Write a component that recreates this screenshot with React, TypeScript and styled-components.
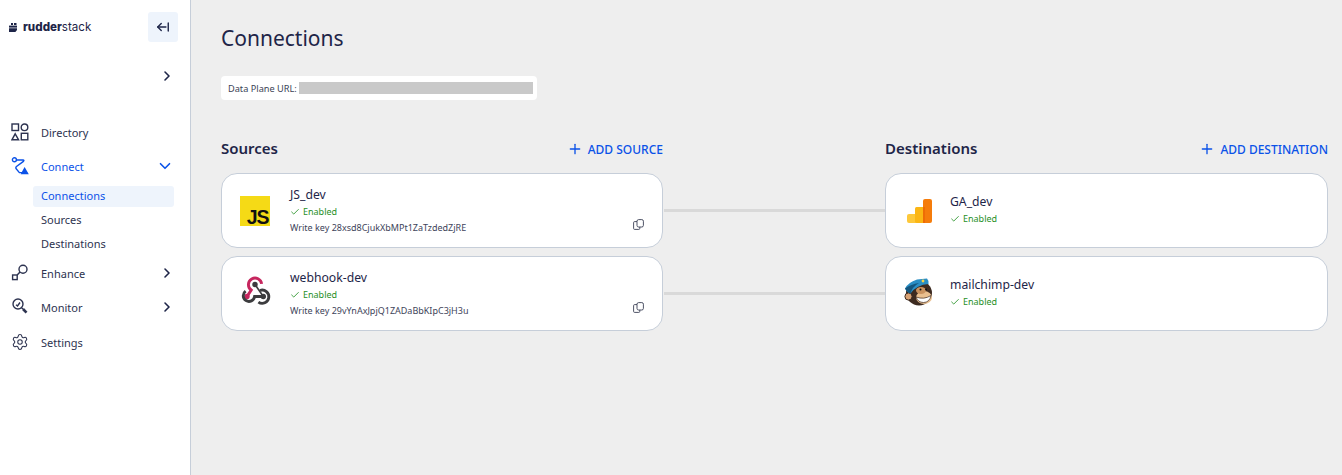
import { ReactNode } from 'react'
import styled, { createGlobalStyle } from 'styled-components'
import { ChevronDown, ChevronRight, Check, Plus, ArrowLeftFromLine, Settings } from 'lucide-react'

const GlobalStyle = createGlobalStyle`
  html, body { margin: 0; padding: 0; height: 100%; }
  body {
    font-family: 'Noto Sans', 'Open Sans', sans-serif;
    background: #eeeeee;
    color: #1e2548;
  }
  #root { height: 100%; }
`

const Shell = styled.div`
  display: flex;
  width: 1342px;
  height: 475px;
  overflow: hidden;
`

// @ NOTE Sidebar

const Sidebar = styled.aside`
  width: 190px;
  flex: none;
  background: #fff;
  border-right: 1px solid #c6ced9;
  display: flex;
  flex-direction: column;
`

const BrandRow = styled.div`
  display: flex;
  align-items: center;
  justify-content: space-between;
  height: 30px;
  margin-top: 12px;
  padding: 0 12px 0 9px;
`

const Brand = styled.div`
  display: flex;
  align-items: center;
  gap: 6px;
  font-family: Inter, sans-serif;
  font-size: 11.6px;
  line-height: 14px;
  color: #1e2548;
  b { font-weight: 800; }
  span { font-weight: 400; }
`

const CollapseButton = styled.div`
  width: 30px;
  height: 30px;
  border-radius: 3px;
  background: #eef4fc;
  display: flex;
  align-items: center;
  justify-content: center;
  color: #1e2548;
`

const WorkspaceRow = styled.div`
  display: flex;
  justify-content: flex-end;
  height: 16px;
  margin-top: 26px;
  padding-right: 15px;
  color: #1e2548;
`

const Nav = styled.nav`
  display: flex;
  flex-direction: column;
  margin-top: 31px;
`

const NavItem = styled.div<{ $active?: boolean }>`
  display: flex;
  align-items: center;
  height: 34px;
  padding: 0 16px 0 11px;
  font-size: 11px;
  color: ${(props) => (props.$active ? '#0b52e8' : '#2d3350')};
  span { margin-left: 12px; flex: 1; }
  svg { flex: none; }
`

const SettingsItem = styled(NavItem)`
  margin-top: 1px;
`

const NavChevron = styled(ChevronRight)`
  margin-right: -1px;
  color: #1e2548;
`

const SubMenu = styled.div`
  display: flex;
  flex-direction: column;
  margin: 3px 0 1px 33px;
  width: 141px;
  gap: 3px;
`

const SubItem = styled.div<{ $active?: boolean }>`
  height: 21px;
  line-height: 19px;
  padding-left: 8px;
  border-radius: 3px;
  font-size: 11px;
  color: ${(props) => (props.$active ? '#0b52e8' : '#2d3350')};
  background: ${(props) => (props.$active ? '#eef4fc' : 'transparent')};
`

// @ NOTE Main content

const Main = styled.main`
  flex: 1;
  padding: 0 14px 0 30px;
`

const Title = styled.h1`
  margin: 23px 0 0;
  font-size: 21px;
  line-height: 30px;
  font-weight: 400;
  color: #1e2548;
`

const UrlPill = styled.div`
  display: flex;
  align-items: center;
  width: 316px;
  height: 24px;
  box-sizing: border-box;
  margin-top: 23px;
  padding: 0 4px 0 7px;
  background: #fff;
  border-radius: 4px;
  font-size: 9.2px;
  color: #3a3f55;
  white-space: nowrap;
`

const UrlMask = styled.div`
  flex: 1;
  height: 12px;
  margin-left: 2px;
  background: #c9c9c9;
`

const Board = styled.div`
  display: grid;
  grid-template-columns: 442px 222px 443px;
  grid-auto-rows: 75px;
  row-gap: 8px;
`

const Heads = styled.div`
  display: grid;
  grid-template-columns: 442px 222px 443px;
  margin-top: 36px;
  height: 24px;
  margin-bottom: 13px;
`

const HeadCell = styled.div`
  display: flex;
  align-items: center;
  justify-content: space-between;
`

const Heading = styled.h2`
  margin: 0;
  font-size: 15px;
  line-height: 24px;
  font-weight: 600;
  color: #1e2548;
`

const AddLink = styled.div`
  display: flex;
  align-items: center;
  gap: 5px;
  padding-top: 2px;
  font-size: 12px;
  font-weight: 500;
  color: #0b52e8;
  white-space: nowrap;
`

const Connector = styled.div`
  align-self: center;
  height: 3px;
  background: #d9d9d9;
  margin-left: 1px;
`

const Card = styled.div`
  position: relative;
  display: flex;
  align-items: center;
  box-sizing: border-box;
  background: #fff;
  border: 1px solid #c6ced9;
  border-radius: 16px;
  padding-left: 18px;
`

const LogoBox = styled.div<{ $dest?: boolean }>`
  width: 30px;
  height: 30px;
  flex: none;
  margin-right: ${(props) => (props.$dest ? '16px' : '20px')};
  display: flex;
  align-items: center;
  justify-content: center;
`

const CardBody = styled.div<{ $dest?: boolean }>`
  display: flex;
  flex-direction: column;
  padding-bottom: ${(props) => (props.$dest ? '2px' : '0')};
`

const CardName = styled.div`
  font-size: 12.2px;
  line-height: 16px;
  color: #1e2548;
`

const Status = styled.div`
  display: flex;
  align-items: center;
  gap: 3px;
  margin-top: 3px;
  font-size: 9px;
  line-height: 12px;
  color: #1f8f1f;
`

const WriteKey = styled.div`
  margin-top: 3px;
  font-size: 9px;
  line-height: 13px;
  color: #40445a;
`

const CopyIcon = styled.svg`
  position: absolute;
  right: 18px;
  top: 45px;
`

// @ NOTE Drawn icons

const stroke = { fill: 'none', stroke: 'currentColor', strokeWidth: 1.4 }

const DirectoryIcon = () => (
  <svg width="18" height="18" viewBox="0 0 18 18" {...stroke}>
    <rect x="1" y="1" width="6.5" height="6.5" />
    <circle cx="13.5" cy="4.3" r="3.3" />
    <path d="M4.2 10.8 L7.6 16.8 H0.9 Z" />
    <rect x="10.3" y="10.3" width="6.5" height="6.5" />
  </svg>
)

const ConnectIcon = () => (
  <svg width="18" height="18" viewBox="0 0 18 18" {...stroke}>
    <circle cx="3.4" cy="2.8" r="2" />
    <path d="M5.4 3 H12 Q13.6 3 12.4 4.4 L5.5 9.5 Q4.2 10.8 5.4 12 L8.4 15.6 H11" />
    <path d="M13.6 11.4 L16.6 16.6 H10.8 Z" fill="currentColor" />
  </svg>
)

const EnhanceIcon = () => (
  <svg width="18" height="18" viewBox="0 0 18 18" {...stroke}>
    <circle cx="12" cy="5.2" r="4" />
    <path d="M9 8 L6.2 11" />
    <rect x="1.6" y="11" width="4.6" height="4.6" />
  </svg>
)

const MonitorIcon = () => (
  <svg width="18" height="18" viewBox="0 0 18 18" {...stroke}>
    <circle cx="7" cy="6" r="5" />
    <path d="M5 6.8 L6.5 8 L9 4.5" />
    <path d="M10.5 9.8 L12 11" />
    <path d="M12 11 L15.5 14.6" strokeWidth="2.6" />
  </svg>
)

const LogoMark = () => (
  <svg width="8" height="9" viewBox="0 0 8 9" fill="#1e2548">
    <rect x="2" y="0" width="2" height="2" />
    <rect x="5" y="0" width="2.5" height="2" />
    <path d="M0 2.6 H8 V4.6 H0 Z" />
    <path d="M0 5.2 H8 V7 L6.4 9 H0 Z" />
  </svg>
)

const JsLogo = () => (
  <svg width="30" height="30" viewBox="0 0 30 30" overflow="visible">
    <rect width="30" height="30" fill="#f5da16" />
    <text
      x="28.5"
      y="28"
      textAnchor="end"
      fontFamily="'Liberation Sans', sans-serif"
      fontWeight="700"
      fontSize="19.5"
      letterSpacing="-1"
      fill="#111"
    >
      JS
    </text>
  </svg>
)

const WebhookLogo = () => (
  <svg width="30" height="30" viewBox="240 278.5 30 30" fill="none" overflow="visible">
    <path d="M247 296 L251.2 289.5 A6.6 6.6 0 1 1 261.6 283.4" stroke="#c6265e" strokeWidth="2.9" />
    <circle cx="247" cy="296" r="2.7" fill="#c6265e" />
    <path d="M255 284 L263.3 296" stroke="#3c3c3e" strokeWidth="1.6" />
    <path d="M245.6 290.6 A5.7 5.7 0 1 0 254.6 296 H263" stroke="#3c3c3e" strokeWidth="2.9" />
    <path d="M260 290 A6.6 6.6 0 1 1 258.4 301.6" stroke="#3c3c3e" strokeWidth="2.9" />
    <circle cx="255" cy="284" r="2.7" fill="#3c3c3e" />
    <circle cx="263.3" cy="296" r="2.7" fill="#3c3c3e" />
  </svg>
)

const GaLogo = () => (
  <svg width="25" height="24" viewBox="0 0 25 24">
    <rect x="0" y="15" width="10" height="9" rx="2" fill="#fdc83a" />
    <rect x="8" y="8" width="10" height="16" rx="1.5" fill="#fbb615" />
    <rect x="16" y="0" width="9" height="24" rx="2" fill="#f57c0b" />
    <rect x="16" y="8" width="2" height="16" fill="#ee6c05" />
  </svg>
)

const MailchimpLogo = () => (
  <svg width="30" height="30" viewBox="904 278.5 30 30" overflow="visible">
    <ellipse cx="919" cy="292.5" rx="13" ry="12.5" fill="#3d2a20" />
    <circle cx="908.5" cy="296" r="3.6" fill="#d8a274" stroke="#3d2a20" />
    <ellipse cx="924" cy="297" rx="8" ry="6.5" fill="#e9bf8f" />
    <ellipse cx="921" cy="290" rx="5" ry="3.4" fill="#c9925f" />
    <path d="M916 296.5 Q924 299.5 931 295 Q929.5 302 923.5 302 Q918 302 916 296.5 Z" fill="#fff" stroke="#3d2a20" strokeWidth="0.7" />
    <path d="M905 288 Q908 282 917 279 L927 278 Q929 280 928.5 283.5 Q917 284 910.5 293 Q907 292 905 288 Z" fill="#2a8ec4" />
    <path d="M905 288 Q911 283.5 919 282.5 Q912 286.5 910.5 293 Q907 292 905 288 Z" fill="#14567e" />
    <circle cx="923" cy="280.5" r="1.4" fill="#f2d24a" />
    <circle cx="926" cy="289" r="1" fill="#111" />
    <circle cx="920.5" cy="289" r="1" fill="#111" />
  </svg>
)

const Copy = () => (
  <CopyIcon width="11" height="11" viewBox="0 0 11 11" fill="none" stroke="#3a3f55" strokeWidth="0.9">
    <rect x="0.6" y="2.6" width="6.2" height="7.8" rx="1" />
    <rect x="4" y="0.6" width="6.4" height="7.4" rx="1.6" fill="#fff" />
  </CopyIcon>
)

// @ NOTE Data

const sources = [
  { name: 'JS_dev', writeKey: '28xsd8CjukXbMPt1ZaTzdedZjRE', logo: <JsLogo /> },
  { name: 'webhook-dev', writeKey: '29vYnAxJpjQ1ZADaBbKIpC3jH3u', logo: <WebhookLogo /> },
]

const destinations = [
  { name: 'GA_dev', logo: <GaLogo /> },
  { name: 'mailchimp-dev', logo: <MailchimpLogo /> },
]

const Enabled = () => (
  <Status>
    <Check size={10} strokeWidth={2} />
    Enabled
  </Status>
)

const MenuRow = ({ icon, label, active, open }: { icon: ReactNode; label: string; active?: boolean; open?: boolean }) => (
  <NavItem $active={active}>
    {icon}
    <span>{label}</span>
    {open ? <ChevronDown size={18} strokeWidth={2.2} /> : <NavChevron size={16} strokeWidth={2.4} />}
  </NavItem>
)

const Row = ({
  source,
  destination,
}: {
  source: (typeof sources)[number]
  destination: (typeof destinations)[number]
}) => (
  <>
    <Card>
      <LogoBox>{source.logo}</LogoBox>
      <CardBody>
        <CardName>{source.name}</CardName>
        <Enabled />
        <WriteKey>Write key {source.writeKey}</WriteKey>
      </CardBody>
      <Copy />
    </Card>
    <Connector />
    <Card>
      <LogoBox $dest>{destination.logo}</LogoBox>
      <CardBody $dest>
        <CardName>{destination.name}</CardName>
        <Enabled />
      </CardBody>
    </Card>
  </>
)

const App = () => {
  return (
    <Shell>
      <GlobalStyle />
      <Sidebar>
        <BrandRow>
          <Brand>
            <LogoMark />
            <div>
              <b>rudder</b>
              <span>stack</span>
            </div>
          </Brand>
          <CollapseButton>
            <ArrowLeftFromLine size={14} strokeWidth={2.4} />
          </CollapseButton>
        </BrandRow>
        <WorkspaceRow>
          <ChevronRight size={16} strokeWidth={2.4} />
        </WorkspaceRow>
        <Nav>
          <NavItem>
            <DirectoryIcon />
            <span>Directory</span>
          </NavItem>
          <MenuRow icon={<ConnectIcon />} label="Connect" active open />
          <SubMenu>
            <SubItem $active>Connections</SubItem>
            <SubItem>Sources</SubItem>
            <SubItem>Destinations</SubItem>
          </SubMenu>
          <MenuRow icon={<EnhanceIcon />} label="Enhance" />
          <MenuRow icon={<MonitorIcon />} label="Monitor" />
          <SettingsItem>
            <Settings size={18} strokeWidth={1.4} />
            <span>Settings</span>
          </SettingsItem>
        </Nav>
      </Sidebar>
      <Main>
        <Title>Connections</Title>
        <UrlPill>
          Data Plane URL:
          <UrlMask />
        </UrlPill>
        <Heads>
          <HeadCell>
            <Heading>Sources</Heading>
            <AddLink>
              <Plus size={16} strokeWidth={2} />
              ADD SOURCE
            </AddLink>
          </HeadCell>
          <div />
          <HeadCell>
            <Heading>Destinations</Heading>
            <AddLink>
              <Plus size={16} strokeWidth={2} />
              ADD DESTINATION
            </AddLink>
          </HeadCell>
        </Heads>
        <Board>
          {sources.map((source, index) => (
            <Row key={source.name} source={source} destination={destinations[index]} />
          ))}
        </Board>
      </Main>
    </Shell>
  )
}

export default App
